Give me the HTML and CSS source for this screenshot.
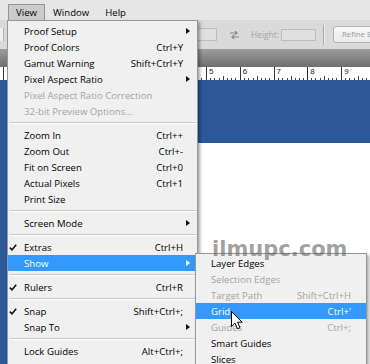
FILE: index.html
```html
<!DOCTYPE html>
<html lang="en">
<head>
    <meta charset="UTF-8">
    <meta name="viewport" content="width=device-width, initial-scale=1.0">
    <title>View Menu</title>
    <link rel="stylesheet" href="styles.css">
</head>
<body>

    <!-- Menu Bar -->
    <div class="menubar">
        <span class="menubar-item open">View</span>
        <span class="menubar-item">Window</span>
        <span class="menubar-item">Help</span>
    </div>

    <!-- Options Bar -->
    <div class="options-bar">
        <span class="stub"></span>
        <span class="field width-field"></span>
        <svg class="swap-icon" width="9" height="8" viewBox="0 0 9 8">
            <path d="M0 2h7M5 0l2 2-2 2M9 6H2M4 4L2 6l2 2" fill="none" stroke="#8a8a8a" stroke-width="1.2"/>
        </svg>
        <span class="opt-label">Height:</span>
        <span class="field height-field"></span>
        <span class="divider"></span>
        <span class="opt-button">Refine Edge...</span>
    </div>

    <!-- Document Tabs -->
    <div class="tab-bar"></div>

    <!-- Ruler -->
    <div class="ruler">
        <span class="ruler-mark">1</span>
        <span class="ruler-mark">0</span>
        <span class="ruler-mark">1</span>
        <span class="ruler-mark">2</span>
        <span class="ruler-mark">3</span>
        <span class="ruler-mark">4</span>
        <span class="ruler-mark">5</span>
        <span class="ruler-mark">6</span>
        <span class="ruler-mark">7</span>
        <span class="ruler-mark">8</span>
        <span class="ruler-mark">9</span>
    </div>

    <!-- Document -->
    <div class="document">
        <div class="doc-left"></div>
        <div class="doc-right">
            <div class="canvas"></div>
        </div>
    </div>

    <!-- View Menu -->
    <div class="menu view-menu">
        <div class="item"><span class="check"></span><span class="name">Proof Setup</span><span class="arrow"><i></i></span></div>
        <div class="item"><span class="check"></span><span class="name">Proof Colors</span><span class="key">Ctrl+Y</span><span class="arrow"></span></div>
        <div class="item"><span class="check"></span><span class="name">Gamut Warning</span><span class="key">Shift+Ctrl+Y</span><span class="arrow"></span></div>
        <div class="item"><span class="check"></span><span class="name">Pixel Aspect Ratio</span><span class="arrow"><i></i></span></div>
        <div class="item disabled"><span class="check"></span><span class="name">Pixel Aspect Ratio Correction</span><span class="arrow"></span></div>
        <div class="item disabled"><span class="check"></span><span class="name">32-bit Preview Options...</span><span class="arrow"></span></div>
        <div class="separator"></div>
        <div class="item"><span class="check"></span><span class="name">Zoom In</span><span class="key">Ctrl++</span><span class="arrow"></span></div>
        <div class="item"><span class="check"></span><span class="name">Zoom Out</span><span class="key">Ctrl+-</span><span class="arrow"></span></div>
        <div class="item"><span class="check"></span><span class="name">Fit on Screen</span><span class="key">Ctrl+0</span><span class="arrow"></span></div>
        <div class="item"><span class="check"></span><span class="name">Actual Pixels</span><span class="key">Ctrl+1</span><span class="arrow"></span></div>
        <div class="item"><span class="check"></span><span class="name">Print Size</span><span class="arrow"></span></div>
        <div class="separator"></div>
        <div class="item"><span class="check"></span><span class="name">Screen Mode</span><span class="arrow"><i></i></span></div>
        <div class="separator"></div>
        <div class="item"><span class="check"><svg width="8" height="7" viewBox="0 0 8 7"><path d="M0.8 3.6L3 5.8 7.2 0.8" fill="none" stroke="#111" stroke-width="1.5"/></svg></span><span class="name">Extras</span><span class="key">Ctrl+H</span><span class="arrow"></span></div>
        <div class="item active"><span class="check"></span><span class="name">Show</span><span class="arrow"><i></i></span></div>
        <div class="separator"></div>
        <div class="item"><span class="check"><svg width="8" height="7" viewBox="0 0 8 7"><path d="M0.8 3.6L3 5.8 7.2 0.8" fill="none" stroke="#111" stroke-width="1.5"/></svg></span><span class="name">Rulers</span><span class="key">Ctrl+R</span><span class="arrow"></span></div>
        <div class="separator"></div>
        <div class="item"><span class="check"><svg width="8" height="7" viewBox="0 0 8 7"><path d="M0.8 3.6L3 5.8 7.2 0.8" fill="none" stroke="#111" stroke-width="1.5"/></svg></span><span class="name">Snap</span><span class="key">Shift+Ctrl+;</span><span class="arrow"></span></div>
        <div class="item"><span class="check"></span><span class="name">Snap To</span><span class="arrow"><i></i></span></div>
        <div class="separator"></div>
        <div class="item"><span class="check"></span><span class="name">Lock Guides</span><span class="key">Alt+Ctrl+;</span><span class="arrow"></span></div>
        <div class="item disabled"><span class="check"></span><span class="name">Clear Guides</span><span class="arrow"></span></div>
    </div>

    <!-- Show Submenu -->
    <div class="menu show-menu">
        <div class="item"><span class="name">Layer Edges</span></div>
        <div class="item disabled"><span class="name">Selection Edges</span></div>
        <div class="item disabled"><span class="name">Target Path</span><span class="key">Shift+Ctrl+H</span></div>
        <div class="item active"><span class="name">Grid</span><span class="key">Ctrl+'</span></div>
        <div class="item disabled"><span class="name">Guides</span><span class="key">Ctrl+;</span></div>
        <div class="item"><span class="name">Smart Guides</span></div>
        <div class="item"><span class="name">Slices</span></div>
    </div>

    <!-- Watermark -->
    <div class="watermark">ilmupc.com</div>

    <!-- Mouse Pointer -->
    <svg class="cursor" width="12" height="19" viewBox="0 0 12 19">
        <path d="M0.5 0.5V15.5L4 12.2 6.5 17.8 9 16.7 6.6 11.2H11.2Z" fill="#fff" stroke="#000" stroke-width="1"/>
    </svg>

</body>
</html>
```

FILE: styles.css
```css
/* Global Reset */
* {
    margin: 0;
    padding: 0;
    box-sizing: border-box;
    font-family: "Open Sans", sans-serif;
}

body {
    width: 370px;
    height: 364px;
    overflow: hidden;
    position: relative;
    background: #fff;
    display: flex;
    flex-direction: column;
}

/* Menu Bar */
.menubar {
    height: 20px;
    flex: 0 0 20px;
    background: #e6e6e6;
    display: flex;
    align-items: flex-end;
    padding-left: 8px;
}

.menubar-item {
    height: 16px;
    line-height: 15px;
    padding: 0 7px;
    font-size: 9.6px;
    color: #000;
    border: 1px solid transparent;
    border-bottom: none;
}

.menubar-item.open {
    background: #cbcbcb;
    border-color: #949494;
}

/* Options Bar */
.options-bar {
    height: 29px;
    flex: 0 0 29px;
    background: #dadada;
    display: flex;
    align-items: center;
    overflow: hidden;
}

.options-bar > * {
    flex-shrink: 0;
}

.stub {
    width: 4px;
    height: 13px;
    background: #f0f0f0;
    border-right: 1px solid #b0b0b0;
}

.field {
    height: 13px;
    background: #e0e0e0;
    border: 1px solid #bdbdbd;
}

.width-field {
    margin-left: 146px;
    width: 67px;
}

.swap-icon {
    margin-left: 13px;
}

.opt-label {
    margin-left: 12px;
    width: 29px;
    font-size: 8.4px;
    color: #a2a2a2;
}

.height-field {
    margin-left: 1px;
    width: 35px;
    height: 12px;
}

.divider {
    margin-left: 7px;
    width: 2px;
    height: 20px;
    border-left: 1px solid #a8a8a8;
    border-right: 1px solid #ececec;
}

.opt-button {
    margin-left: 8px;
    height: 17px;
    line-height: 15px;
    padding: 0 8px;
    white-space: nowrap;
    font-size: 7.8px;
    color: #9a9a9a;
    background: linear-gradient(#f7f7f7, #ebebeb);
    border: 1px solid #b4b4b4;
    border-radius: 3px;
}

/* Document Tabs */
.tab-bar {
    height: 18px;
    flex: 0 0 18px;
    background: linear-gradient(#9c9c9c, #6e6e6e);
}

/* Ruler */
.ruler {
    height: 13px;
    flex: 0 0 13px;
    background: #fff;
    display: flex;
    padding-left: 3.2px;
    overflow: hidden;
}

.ruler-mark {
    flex: 0 0 33.8px;
    position: relative;
    border-left: 1px solid #333;
    padding-left: 2px;
    font-family: "Liberation Sans", sans-serif;
    font-size: 8px;
    line-height: 9px;
    color: #222;
    background-image: repeating-linear-gradient(to right, transparent 0, transparent 3.2px, #444 3.2px, #444 4.2px);
    background-size: 100% 2px;
    background-repeat: no-repeat;
    background-position: left bottom;
}

.ruler-mark::after {
    content: "";
    position: absolute;
    left: 16px;
    bottom: 0;
    width: 1px;
    height: 4px;
    background: #444;
}

/* Document */
.document {
    flex: 1;
    display: flex;
}

.doc-left {
    width: 100px;
    background: #2c5799;
}

.doc-right {
    flex: 1;
    background: #fff;
}

.canvas {
    height: 63px;
    background: #2c5799;
}

/* Drop-down Menus */
.menu {
    position: absolute;
    background: #f0f0f0;
    border: 1px solid #979797;
    box-shadow: 2px 2px 3px rgba(0, 0, 0, 0.35);
    font-size: 9.6px;
    color: #000;
}

.view-menu {
    left: 7px;
    top: 20px;
    width: 191px;
    padding-top: 2px;
}

.show-menu {
    left: 195px;
    top: 253px;
    width: 172px;
    padding-top: 1px;
}

.item {
    display: flex;
    align-items: center;
    height: 16px;
    white-space: nowrap;
}

.item .name {
    flex: 1;
}

.item .check {
    width: 16px;
    display: flex;
    align-items: center;
    padding-left: 1px;
}

.item .arrow {
    width: 14px;
    display: flex;
    align-items: center;
    padding-left: 3px;
}

.item .arrow i {
    border-left: 4px solid #111;
    border-top: 3.5px solid transparent;
    border-bottom: 3.5px solid transparent;
}

.show-menu .item {
    padding: 0 15px;
}

.item.disabled {
    color: #a3a3a3;
}

.item.active {
    background: #3399ff;
    color: #fff;
}

.item.active .arrow i {
    border-left-color: #fff;
}

.separator {
    height: 8px;
    padding: 3px 1px 0;
}

.separator::before {
    content: "";
    display: block;
    border-top: 1px solid #c8c8c8;
    border-bottom: 1px solid #fff;
}

/* Watermark */
.watermark {
    position: absolute;
    left: 212px;
    top: 237px;
    font-family: "DejaVu Sans", sans-serif;
    font-weight: bold;
    font-size: 21px;
    line-height: 24px;
    color: rgba(100, 100, 100, 0.6);
}

/* Mouse Pointer */
.cursor {
    position: absolute;
    left: 231px;
    top: 311px;
}
```
